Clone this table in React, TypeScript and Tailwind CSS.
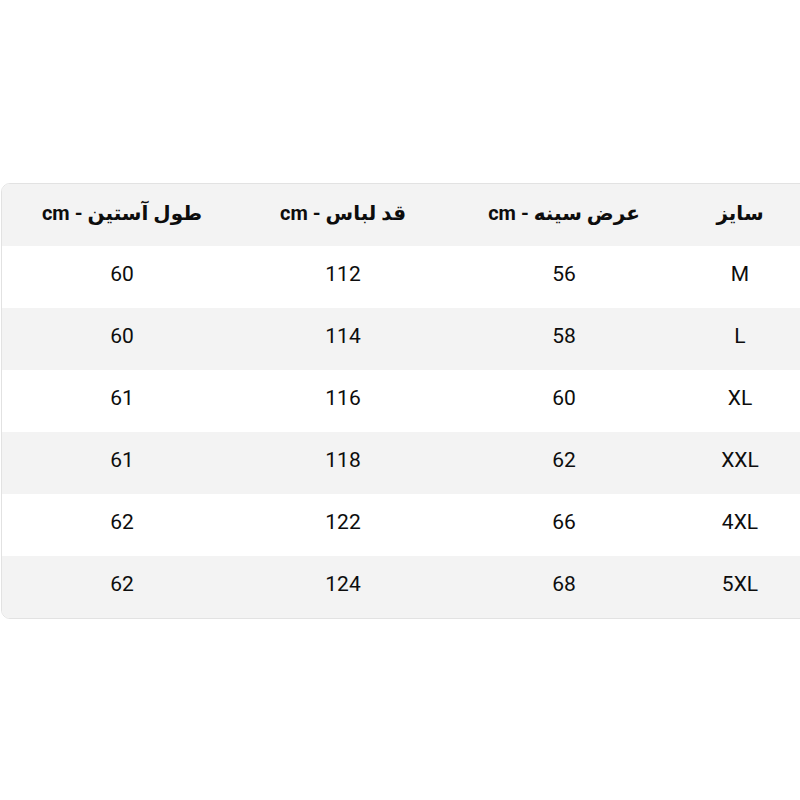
const header = ["طول آستین - cm", "قد لباس - cm", "عرض سینه - cm", "سایز"];

const rows = [
  ["60", "112", "56", "M"],
  ["60", "114", "58", "L"],
  ["61", "116", "60", "XL"],
  ["61", "118", "62", "XXL"],
  ["62", "122", "66", "4XL"],
  ["62", "124", "68", "5XL"],
];

export default function App() {
  return (
    <div className="h-[800px] w-[800px] overflow-hidden bg-white pt-[183px] pl-[1px]">
      <div className="w-[840px] overflow-hidden rounded-[9px] border border-[#e2e2e2] text-[#0d0d0d]">
        <div className="grid h-[62px] grid-cols-[240px_202px_240px_112px] items-center bg-[#f3f3f3] pb-[4px]">
          {header.map((h) => (
            <div
              key={h}
              dir="rtl"
              className="text-center text-[20px] font-bold font-['Roboto','DejaVu_Sans',sans-serif]"
            >
              {h}
            </div>
          ))}
        </div>
        {rows.map((r, i) => (
          <div
            key={r[3]}
            className={
              "grid h-[62px] grid-cols-[240px_202px_240px_112px] items-center pb-[4px] " +
              (i % 2 === 0 ? "bg-white" : "bg-[#f3f3f3]")
            }
          >
            {r.map((v, j) => (
              <div key={j} className="text-center text-[21px] font-['Roboto',sans-serif]">
                {v}
              </div>
            ))}
          </div>
        ))}
      </div>
    </div>
  );
}
